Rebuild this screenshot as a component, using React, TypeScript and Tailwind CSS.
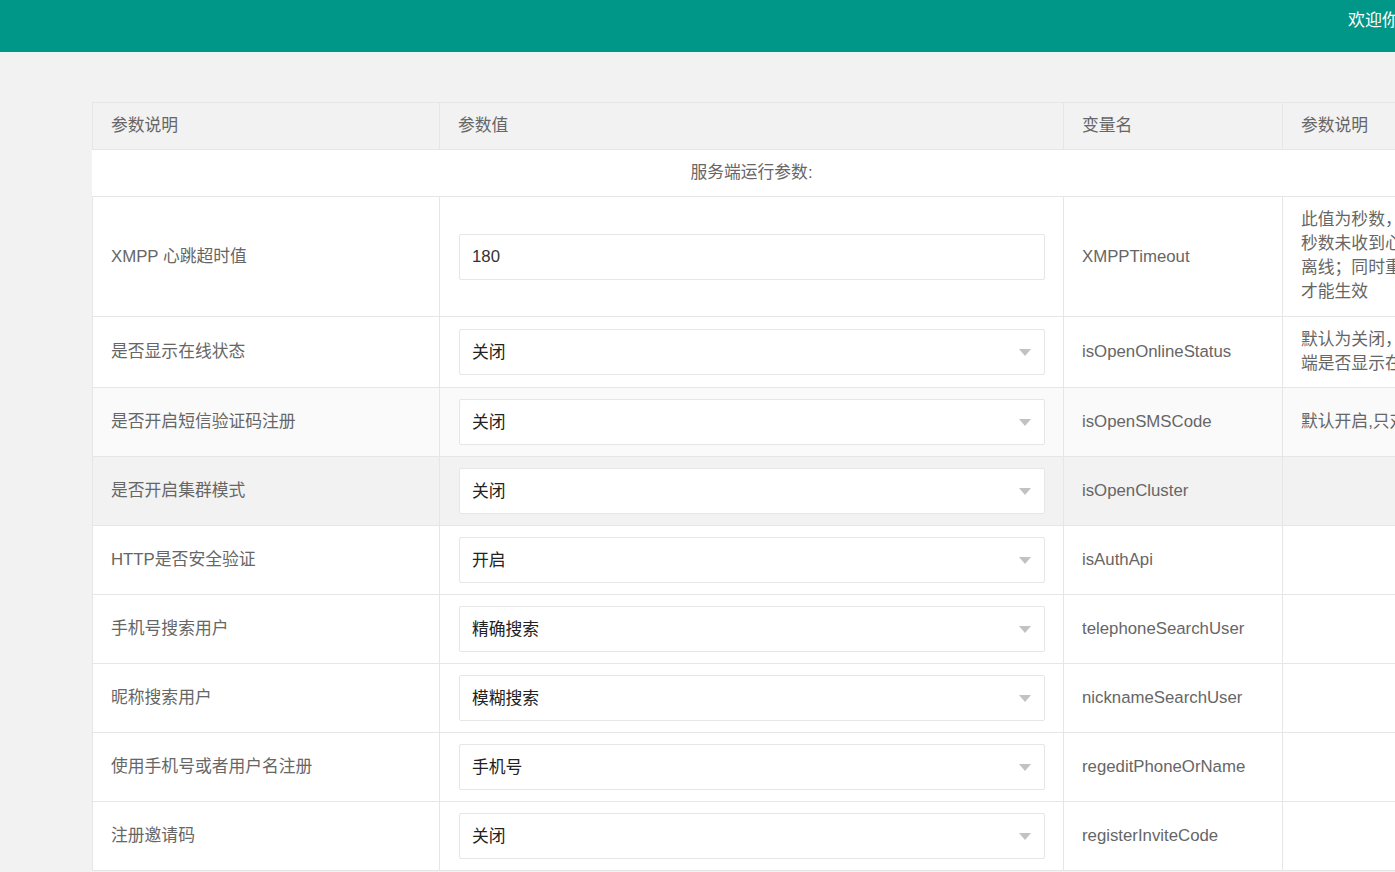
import React from "react";

type Row = {
  label: string;
  kind: "input" | "select";
  value: string;
  name: string;
  desc: string[];
  bg?: string;
};

const rows: Row[] = [
  {
    label: "XMPP 心跳超时值",
    kind: "input",
    value: "180",
    name: "XMPPTimeout",
    desc: ["此值为秒数，超过该", "秒数未收到心跳包则视为", "离线；同时重启服务后", "才能生效"],
  },
  {
    label: "是否显示在线状态",
    kind: "select",
    value: "关闭",
    name: "isOpenOnlineStatus",
    desc: ["默认为关闭，开启后客户", "端是否显示在线状态"],
  },
  {
    label: "是否开启短信验证码注册",
    kind: "select",
    value: "关闭",
    name: "isOpenSMSCode",
    desc: ["默认开启,只对注册生效"],
    bg: "bg-[#fafafa]",
  },
  {
    label: "是否开启集群模式",
    kind: "select",
    value: "关闭",
    name: "isOpenCluster",
    desc: [],
    bg: "bg-[#f2f2f2]",
  },
  { label: "HTTP是否安全验证", kind: "select", value: "开启", name: "isAuthApi", desc: [] },
  { label: "手机号搜索用户", kind: "select", value: "精确搜索", name: "telephoneSearchUser", desc: [] },
  { label: "昵称搜索用户", kind: "select", value: "模糊搜索", name: "nicknameSearchUser", desc: [] },
  { label: "使用手机号或者用户名注册", kind: "select", value: "手机号", name: "regeditPhoneOrName", desc: [] },
  { label: "注册邀请码", kind: "select", value: "关闭", name: "registerInviteCode", desc: [] },
];

const cell = "border border-[#e6e6e6] px-[18px] py-[11px] text-left align-middle font-normal";

export default function App() {
  return (
    <div
      className="w-[1395px] h-[872px] overflow-hidden bg-[#f2f2f2] text-[16.8px] leading-[24px] text-[#666]"
      style={{ fontFamily: '"Liberation Sans", Arial, "Noto Sans CJK SC", sans-serif' }}
    >
      <div className="h-[52px] bg-[#009688] text-white whitespace-nowrap pl-[1348px] pt-[9px] text-[17px]">
        欢迎你，admin
      </div>
      <div className="pt-[50px] pl-[92px]">
        <table className="table-fixed border-collapse w-[1318px] bg-white">
          <colgroup>
            <col className="w-[347px]" />
            <col className="w-[624px]" />
            <col className="w-[219px]" />
            <col className="w-[128px]" />
          </colgroup>
          <thead>
            <tr className="bg-[#f2f2f2]">
              <th className={cell}>参数说明</th>
              <th className={cell}>参数值</th>
              <th className={cell}>变量名</th>
              <th className={cell + " whitespace-nowrap"}>参数说明</th>
            </tr>
          </thead>
          <tbody>
            <tr>
              <td colSpan={4} className="border-y border-[#e6e6e6] px-[18px] py-[11px] text-center">
                服务端运行参数:
              </td>
            </tr>
            {rows.map((r) => (
              <tr key={r.name} className={r.bg ?? "bg-white"}>
                <td className={cell}>{r.label}</td>
                <td className={cell + " pl-[19px]"}>
                  {r.kind === "input" ? (
                    <div className="h-[46px] border border-[#e6e6e6] rounded-[2px] bg-white pl-[12px] flex items-center text-[#333]">
                      {r.value}
                    </div>
                  ) : (
                    <div className="h-[46px] border border-[#e6e6e6] rounded-[2px] bg-white pl-[12px] pr-[13px] flex items-center justify-between text-[#222]">
                      <span className="pt-[2px]">{r.value}</span>
                      <span className="w-0 h-0 border-x-[6px] border-x-transparent border-t-[7px] border-t-[#c2c2c2]" />
                    </div>
                  )}
                </td>
                <td className={cell}>{r.name}</td>
                <td className={cell + " whitespace-nowrap" + (r.desc.length > 3 ? " pb-[12px]" : "")}>
                  {r.desc.map((d, i) => (
                    <div key={i}>{d}</div>
                  ))}
                </td>
              </tr>
            ))}
          </tbody>
        </table>
      </div>
    </div>
  );
}
